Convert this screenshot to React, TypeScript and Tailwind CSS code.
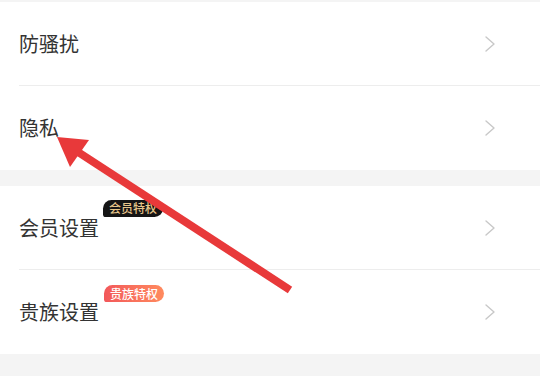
import React from "react";

type Item = { label: string; badge?: "vip" | "noble"; last?: boolean };

function Chevron() {
  return (
    <svg width="12" height="18" viewBox="0 0 12 18" fill="none" className="shrink-0">
      <path d="M2 2l8 7-8 7" stroke="#c8c8c8" strokeWidth="1.4" strokeLinecap="round" strokeLinejoin="round" />
    </svg>
  );
}

function Row({ label, badge, last }: Item) {
  return (
    <div className="h-[84px] pl-[19px] flex">
      <div className={`flex-1 flex items-center pr-[44px] ${last ? "" : "border-b border-[#ededed]"}`}>
        <span className="relative text-[20px] leading-none text-[#333]">
          {label}
          {badge === "vip" && (
            <span className="absolute left-[calc(100%+4px)] top-[-18px] h-[17px] px-[6px] flex items-center whitespace-nowrap rounded-t-[9px] rounded-br-[9px] rounded-bl-[3px] bg-[#151515] text-[12px] font-medium text-[#e6c58a]">
              会员特权
            </span>
          )}
          {badge === "noble" && (
            <span className="absolute left-[calc(100%+5px)] top-[-17px] h-[17px] px-[6px] flex items-center whitespace-nowrap rounded-t-[9px] rounded-br-[9px] rounded-bl-[3px] bg-gradient-to-r from-[#f2575a] to-[#ff8a5e] text-[12px] font-medium text-white">
              贵族特权
            </span>
          )}
        </span>
        <span className="ml-auto">
          <Chevron />
        </span>
      </div>
    </div>
  );
}

export default function App() {
  return (
    <main
      className="relative w-[540px] h-[376px] overflow-hidden bg-[#f4f4f4] pt-[2px]"
      style={{ fontFamily: '"Noto Sans CJK SC", "Noto Sans", sans-serif' }}
    >
      <section className="bg-white">
        <Row label="防骚扰" />
        <Row label="隐私" last />
      </section>
      <div className="h-[16px]" />
      <section className="bg-white">
        <Row label="会员设置" badge="vip" />
        <Row label="贵族设置" badge="noble" last />
      </section>

      <svg className="absolute inset-0 pointer-events-none" width="540" height="376" viewBox="0 0 540 376">
        <line x1="290" y1="290" x2="78" y2="152" stroke="#e8393a" strokeWidth="8" />
        <polygon points="57,137 89,140 70,167" fill="#e8393a" />
      </svg>
    </main>
  );
}
